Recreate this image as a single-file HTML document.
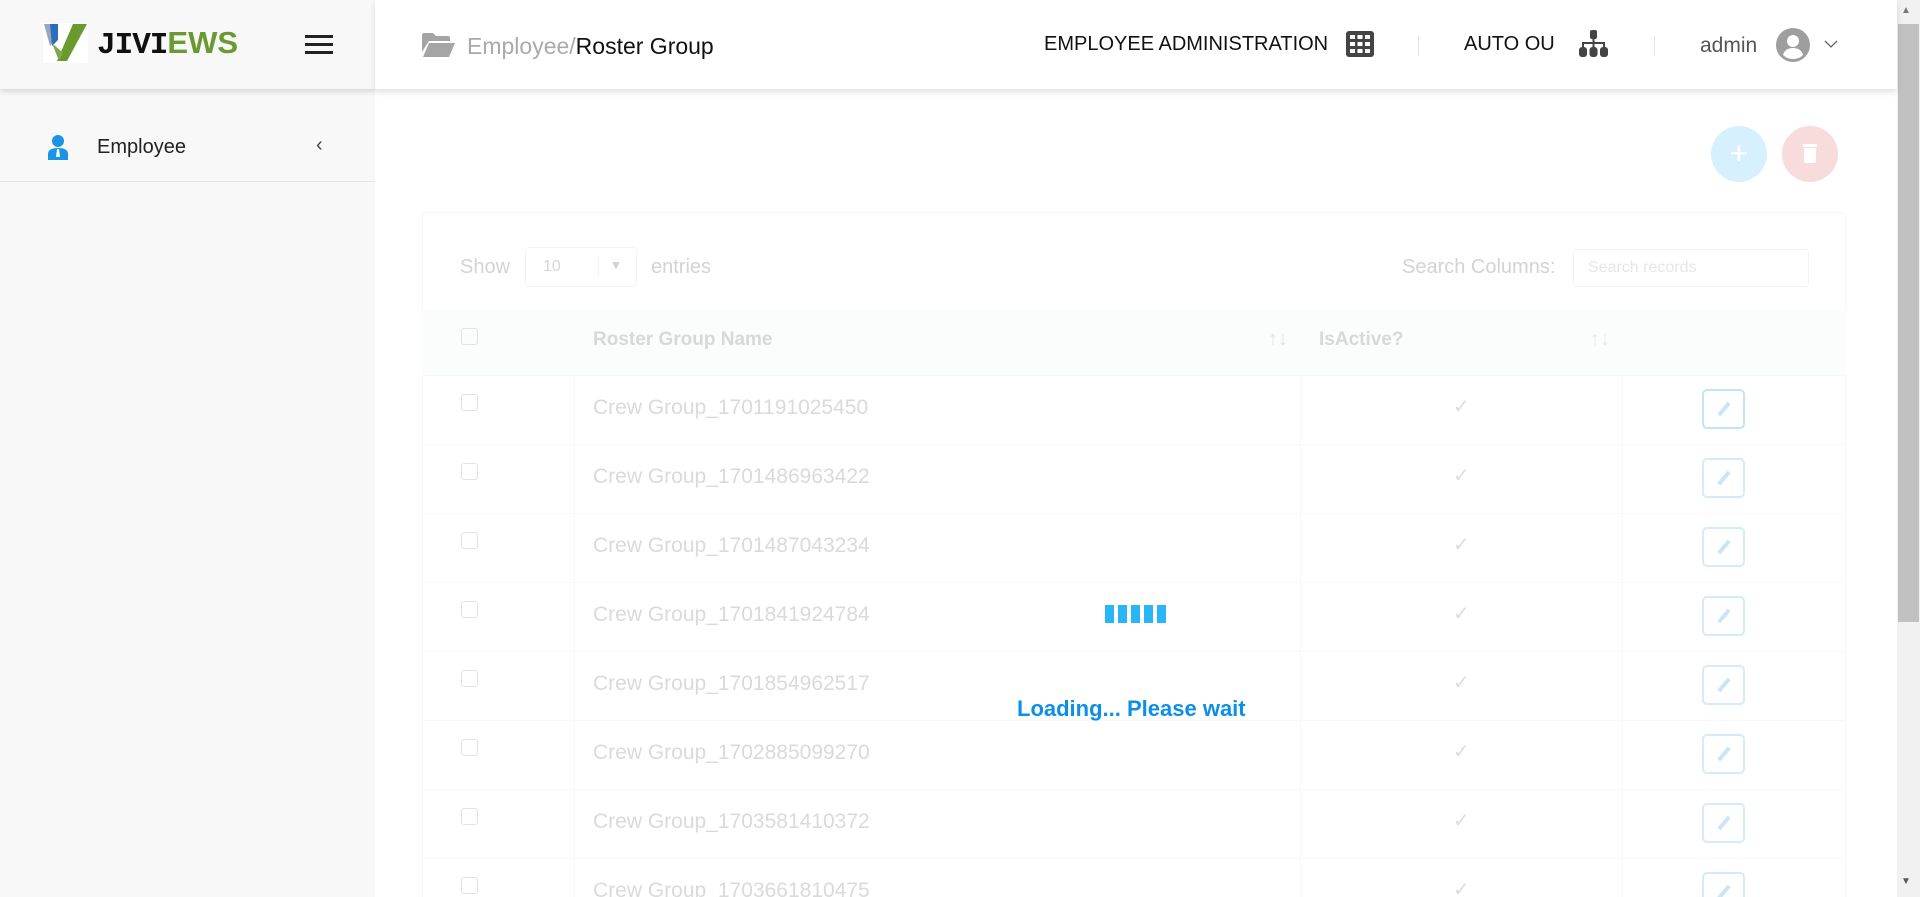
<!DOCTYPE html>
<html><head><meta charset="utf-8"><style>
*{box-sizing:border-box;margin:0;padding:0}
html,body{width:1920px;height:897px;overflow:hidden}
body{background:#fff;font-family:"Liberation Sans",sans-serif;position:relative}
#wrap{position:absolute;left:0;top:0;width:1920px;height:897px;overflow:hidden}
.abs{position:absolute}
.side{left:0;top:0;width:375px;height:897px;background:#f8f8f8}
.sidehead{left:0;top:0;width:375px;height:89px;background:#f8f8f8;box-shadow:0 3px 5px rgba(0,0,0,.12);z-index:2}
.head{left:375px;top:0;width:1522px;height:89px;background:#fff;box-shadow:0 3px 6px rgba(0,0,0,.12);z-index:2}
.t{white-space:nowrap}
.row{position:absolute;left:422px;width:1424px;height:69px;border-top:1px solid #f8f8f8}
.cb{position:absolute;width:17px;height:17px;border:1.5px solid #e2e2e2;border-radius:3px}
.rt{position:absolute;left:171px;top:20px;font-size:21px;color:#dadada}
.ck{position:absolute;left:1031px;top:18px;color:#ddd;font-size:20px}
.ed{position:absolute;left:1280px;top:13px;width:43px;height:40px;border:2px solid #d3ecfb;border-radius:5px}
.ed:after{content:"";position:absolute;left:18px;top:10px;width:4px;height:16px;background:#c7e6f8;transform:rotate(40deg)}
.vl{position:absolute;top:0;height:69px;width:1px;background:#f8f8f8}
</style></head><body><div id="wrap">
<div class="abs side"></div>
<div class="abs sidehead">
  <svg class="abs" style="left:43px;top:23px" width="45" height="40" viewBox="0 0 45 40"><rect width="45" height="40" fill="#fff"/><path d="M1 1h12v14l-6 8z" fill="#9aa7b8"/><path d="M7 1h8v16l-6 6z" fill="#2a6fbd"/><path d="M14 38L30 1h14L24 38z" fill="#6a9a2f"/><path d="M9 20l7 18 4-8z" fill="#7fa84a"/></svg>
  <div class="abs t" style="left:97px;top:26px;font-size:31px;font-weight:bold;line-height:34px"><span style="color:#111;font-family:'Liberation Mono',monospace;letter-spacing:-1px">JIVI</span><span style="color:#6a9a2f">EWS</span></div>
  <div class="abs" style="left:305px;top:35px;width:28px;height:3px;background:#222;box-shadow:0 8px 0 #222,0 16px 0 #222"></div>
</div>
<div class="abs" style="left:0;top:181px;width:375px;height:1px;background:#e6e6e6"></div>
<svg class="abs" style="left:47px;top:135px" width="22" height="25" viewBox="0 0 22 25"><circle cx="11" cy="6" r="6" fill="#1a95e6"/><path d="M1 25v-6q0-6 10-6t10 6v6z" fill="#1a95e6"/><path d="M10 14h2l1 8h-4z" fill="#fff"/></svg>
<div class="abs t" style="left:97px;top:136px;font-size:20px;color:#222">Employee</div>
<div class="abs t" style="left:316px;top:134px;font-size:20px;color:#444">‹</div>

<div class="abs head">
  <svg class="abs" style="left:47px;top:32px" width="33" height="25" viewBox="0 0 33 25"><path d="M0 3q0-2 2-2h9l3 3h12q2 0 2 2v3H7L0 20z" fill="#a5a5a5"/><path d="M7 11h26l-6 14H1z" fill="#a5a5a5"/></svg>
  <div class="abs t" style="left:92px;top:33px;font-size:23px;color:#aaa">Employee/<span style="color:#111">Roster Group</span></div>
  <div class="abs t" style="left:669px;top:33px;font-size:20px;color:#111">EMPLOYEE ADMINISTRATION</div>
  <svg class="abs" style="left:971px;top:31px" width="28" height="26" viewBox="0 0 28 26"><rect width="28" height="26" rx="3" fill="#444"/><g fill="#fff"><rect x="4" y="4" width="5" height="4"/><rect x="11.5" y="4" width="5" height="4"/><rect x="19" y="4" width="5" height="4"/><rect x="4" y="11" width="5" height="4"/><rect x="11.5" y="11" width="5" height="4"/><rect x="19" y="11" width="5" height="4"/><rect x="4" y="18" width="5" height="4"/><rect x="11.5" y="18" width="5" height="4"/><rect x="19" y="18" width="5" height="4"/></g></svg>
  <div class="abs" style="left:1043px;top:36px;width:1px;height:20px;background:#e3e3e3"></div>
  <div class="abs t" style="left:1089px;top:33px;font-size:20px;color:#111">AUTO OU</div>
  <svg class="abs" style="left:1203px;top:30px" width="31" height="27" viewBox="0 0 31 27"><g fill="#444"><rect x="12" y="0" width="7" height="9" rx="2"/><rect x="14.5" y="8" width="2" height="5"/><rect x="4" y="12" width="23" height="2"/><rect x="4" y="12" width="2" height="5"/><rect x="25" y="12" width="2" height="5"/><rect x="14.5" y="12" width="2" height="5"/><rect x="1" y="17" width="8" height="10" rx="3"/><rect x="11.5" y="17" width="8" height="10" rx="3"/><rect x="22" y="17" width="8" height="10" rx="3"/></g></svg>
  <div class="abs" style="left:1279px;top:36px;width:1px;height:20px;background:#e3e3e3"></div>
  <div class="abs t" style="left:1325px;top:34px;font-size:21px;color:#555">admin</div>
  <svg class="abs" style="left:1401px;top:28px" width="34" height="34" viewBox="0 0 34 34"><circle cx="17" cy="17" r="17" fill="#9e9e9e"/><circle cx="17" cy="13" r="6" fill="#fff"/><path d="M7 27q2-7 10-7t10 7q-4 4-10 4t-10-4z" fill="#fff"/></svg>
  <svg class="abs" style="left:1449px;top:40px" width="14" height="9" viewBox="0 0 14 9"><path d="M1 1l6 6 6-6" fill="none" stroke="#666" stroke-width="1.3"/></svg>
</div>
<div class="abs" style="left:1897px;top:0;width:23px;height:897px;background:#f1f1f1"></div>
<div class="abs" style="left:1898px;top:24px;width:21px;height:598px;background:#c1c1c1"></div>
<div class="abs t" style="left:1901px;top:5px;font-size:10px;color:#777">▲</div>
<div class="abs t" style="left:1901px;top:876px;font-size:10px;color:#555">▼</div>

<div class="abs" style="left:1711px;top:126px;width:56px;height:56px;border-radius:50%;background:#d6f0fd;color:#fff;font-size:32px;text-align:center;line-height:54px">+</div>
<div class="abs" style="left:1782px;top:126px;width:56px;height:56px;border-radius:50%;background:#f8dcdc"><div class="abs" style="left:21px;top:18px;width:14px;height:3px;background:#fff"></div><div class="abs" style="left:22px;top:22px;width:12px;height:15px;background:#fff;border-radius:0 0 2px 2px"></div></div>

<div class="abs" style="left:422px;top:212px;width:1424px;height:700px;border:1px solid #f6f6f6;border-radius:4px"></div>
<div class="abs t" style="left:460px;top:256px;font-size:20px;color:#d3d3d3">Show</div>
<div class="abs" style="left:525px;top:247px;width:112px;height:40px;border:1px solid #f3f3f3;border-radius:4px"><span class="abs" style="left:17px;top:10px;font-size:16px;color:#d6d6d6">10</span><span class="abs" style="left:72px;top:10px;width:1px;height:18px;background:#f3f3f3"></span><span class="abs" style="left:84px;top:10px;font-size:12px;color:#d0d0d0">▼</span></div>
<div class="abs t" style="left:651px;top:256px;font-size:20px;color:#d3d3d3">entries</div>
<div class="abs t" style="left:1402px;top:256px;font-size:20px;color:#d3d3d3">Search Columns:</div>
<div class="abs" style="left:1573px;top:249px;width:236px;height:38px;border:1px solid #f3f3f3;border-radius:4px"><span class="abs t" style="left:14px;top:9px;font-size:16px;color:#e6e6e6">Search records</span></div>

<div class="abs" style="left:422px;top:310px;width:1424px;height:65px;background:#fbfcfc"></div>
<div class="cb" style="left:461px;top:328px"></div>
<div class="abs t" style="left:593px;top:329px;font-size:19px;font-weight:bold;color:#d8d8d8">Roster Group Name</div>
<div class="abs t" style="left:1268px;top:328px;font-size:20px;color:#e2e2e2">↑↓</div>
<div class="abs t" style="left:1319px;top:329px;font-size:19px;font-weight:bold;color:#d8d8d8">IsActive?</div>
<div class="abs t" style="left:1590px;top:328px;font-size:20px;color:#e8e8e8">↑↓</div>

<div class="row" style="top:375px"><div class="vl" style="left:152px"></div><div class="vl" style="left:878px"></div><div class="vl" style="left:1200px"></div><div class="cb" style="left:39px;top:18px"></div><div class="rt">Crew Group_1701191025450</div><div class="ck">✓</div><div class="ed" style="border-color:#c2e4fa"></div></div>
<div class="row" style="top:444px"><div class="vl" style="left:152px"></div><div class="vl" style="left:878px"></div><div class="vl" style="left:1200px"></div><div class="cb" style="left:39px;top:18px"></div><div class="rt">Crew Group_1701486963422</div><div class="ck">✓</div><div class="ed"></div></div>
<div class="row" style="top:513px"><div class="vl" style="left:152px"></div><div class="vl" style="left:878px"></div><div class="vl" style="left:1200px"></div><div class="cb" style="left:39px;top:18px"></div><div class="rt">Crew Group_1701487043234</div><div class="ck">✓</div><div class="ed"></div></div>
<div class="row" style="top:582px"><div class="vl" style="left:152px"></div><div class="vl" style="left:878px"></div><div class="vl" style="left:1200px"></div><div class="cb" style="left:39px;top:18px"></div><div class="rt">Crew Group_1701841924784</div><div class="ck">✓</div><div class="ed"></div></div>
<div class="row" style="top:651px"><div class="vl" style="left:152px"></div><div class="vl" style="left:878px"></div><div class="vl" style="left:1200px"></div><div class="cb" style="left:39px;top:18px"></div><div class="rt">Crew Group_1701854962517</div><div class="ck">✓</div><div class="ed"></div></div>
<div class="row" style="top:720px"><div class="vl" style="left:152px"></div><div class="vl" style="left:878px"></div><div class="vl" style="left:1200px"></div><div class="cb" style="left:39px;top:18px"></div><div class="rt">Crew Group_1702885099270</div><div class="ck">✓</div><div class="ed"></div></div>
<div class="row" style="top:789px"><div class="vl" style="left:152px"></div><div class="vl" style="left:878px"></div><div class="vl" style="left:1200px"></div><div class="cb" style="left:39px;top:18px"></div><div class="rt">Crew Group_1703581410372</div><div class="ck">✓</div><div class="ed"></div></div>
<div class="row" style="top:858px"><div class="vl" style="left:152px"></div><div class="vl" style="left:878px"></div><div class="vl" style="left:1200px"></div><div class="cb" style="left:39px;top:18px"></div><div class="rt">Crew Group_1703661810475</div><div class="ck">✓</div><div class="ed"></div></div>

<div class="abs" style="left:1105px;top:605px;width:9px;height:18px;background:#29b6f6"></div>
<div class="abs" style="left:1118px;top:605px;width:9px;height:18px;background:#29b6f6"></div>
<div class="abs" style="left:1131px;top:605px;width:9px;height:18px;background:#29b6f6"></div>
<div class="abs" style="left:1144px;top:605px;width:9px;height:18px;background:#29b6f6"></div>
<div class="abs" style="left:1157px;top:605px;width:9px;height:18px;background:#29b6f6"></div>
<div class="abs t" style="left:1017px;top:696px;font-size:22px;font-weight:bold;color:#0b8fe8">Loading... Please wait</div>
</div></body></html>
